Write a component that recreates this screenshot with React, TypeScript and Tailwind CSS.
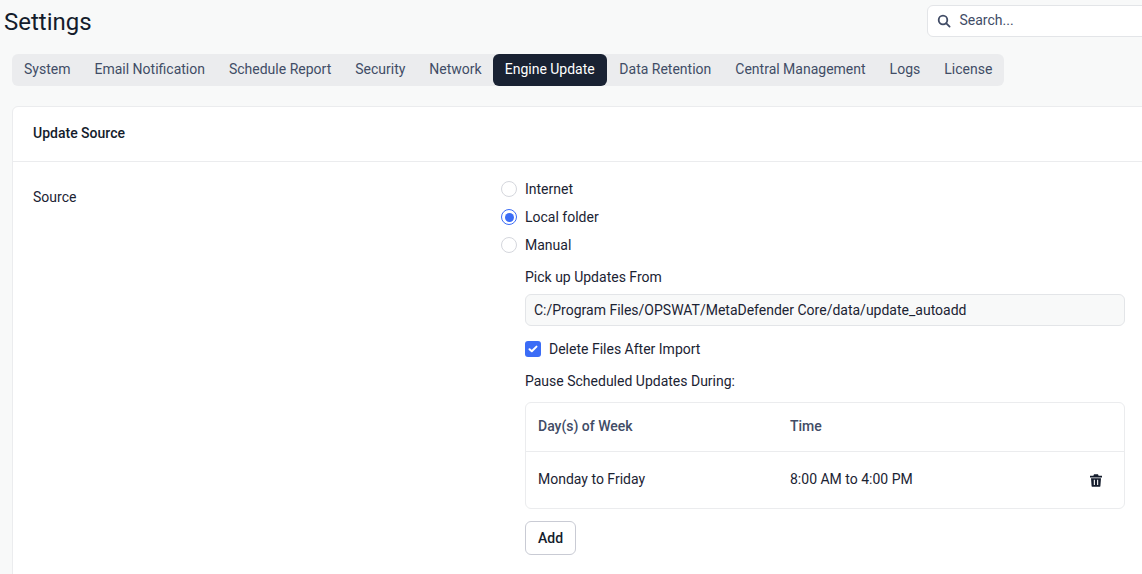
import React from "react";

const tabs = ["System", "Email Notification", "Schedule Report", "Security", "Network", "Engine Update", "Data Retention", "Central Management", "Logs", "License"];

function Radio({ label, checked }: { label: string; checked?: boolean }) {
  return (
    <div className="flex h-7 items-center gap-2">
      {checked ? (
        <span className="flex h-4 w-4 items-center justify-center rounded-full border-[1.5px] border-[#3b6cf6] bg-white">
          <span className="h-[9px] w-[9px] rounded-full bg-[#3b6cf6]" />
        </span>
      ) : (
        <span className="h-4 w-4 rounded-full border-[1.5px] border-[#d5d7dd] bg-white" />
      )}
      <span className="text-[#1b2333]">{label}</span>
    </div>
  );
}

export default function App() {
  return (
    <div className="h-[574px] w-[1142px] overflow-hidden bg-[#f8f9f9] text-sm text-[#1b2333] [font-family:Roboto,sans-serif]">
      <div className="flex h-[54px] justify-between">
        <h1 className="pl-1 pt-[5px] text-2xl leading-[34px] text-[#141c2c]">Settings</h1>
        <div className="mt-[5px] flex h-8 w-[240px] shrink-0 translate-x-[25px] items-center gap-2 rounded-md border border-[#e3e5e8] bg-white pl-[9px] text-[#414c66]">
          <svg width="14" height="14" viewBox="0 0 14 14" fill="none" stroke="#414c66" strokeWidth="1.8" strokeLinecap="round">
            <circle cx="6" cy="6" r="4.3" />
            <path d="M9.3 9.3 12.6 12.6" />
          </svg>
          <span className="ml-[0.5px] -translate-y-[1px]">Search...</span>
        </div>
      </div>
      <div className="ml-3 flex h-8 w-max rounded-md bg-[#ebecee]">
        {tabs.map((t) =>
          t === "Engine Update" ? (
            <div key={t} className="-ml-px mr-[0.6px] flex items-center rounded-md bg-[#192233] px-3 pb-[2px] text-white">{t}</div>
          ) : t === "License" ? (
            <div key={t} className="flex items-center pb-[2px] pl-3 pr-[11.4px] text-[#414c66]">{t}</div>
          ) : (
            <div key={t} className="flex items-center px-3 pb-[2px] text-[#414c66]">{t}</div>
          )
        )}
      </div>
      <div className="ml-3 mt-5 h-[520px] w-[1170px] rounded-t-md border border-[#ebecee] bg-white">
        <div className="flex h-[55px] items-center border-b border-[#ebecee] pb-[2px] pl-5 font-medium text-[#141c2c]">Update Source</div>
        <div className="flex pl-5 pt-[13px]">
          <div className="w-[468px] shrink-0 pt-2 leading-[28px]">Source</div>
          <div className="w-[624px]">
            <Radio label="Internet" />
            <Radio label="Local folder" checked />
            <Radio label="Manual" />
            <div className="pl-6">
              <div className="mt-[6px] flex h-6 items-center">Pick up Updates From</div>
              <div className="mt-[5px] flex h-8 items-center rounded-md border border-[#e3e5e8] bg-[#f8f9f9] pl-2">C:/Program Files/OPSWAT/MetaDefender Core/data/update_autoadd</div>
              <div className="mt-[11px] flex h-6 items-center gap-2">
                <span className="flex h-4 w-4 items-center justify-center rounded-[3px] bg-[#3b6cf6]">
                  <svg width="10" height="8" viewBox="0 0 10 8" fill="none" stroke="white" strokeWidth="2" strokeLinecap="round" strokeLinejoin="round">
                    <path d="M1.5 4.2 3.8 6.3 8.5 1.6" />
                  </svg>
                </span>
                <span>Delete Files After Import</span>
              </div>
              <div className="mt-2 flex h-6 items-center">Pause Scheduled Updates During:</div>
              <div className="mt-[9px] rounded-md border border-[#ebecee]">
                <div className="flex h-[49px] items-center border-b border-[#ebecee] pb-[2px] pl-3 font-medium text-[#414c66]">
                  <div className="w-[252px]">Day(s) of Week</div>
                  <div>Time</div>
                </div>
                <div className="flex h-[56px] items-center pl-3">
                  <div className="w-[252px] -translate-y-[1px]">Monday to Friday</div>
                  <div className="-translate-y-[1px]">8:00 AM to 4:00 PM</div>
                  <svg className="ml-auto mr-[22px]" width="12" height="13" viewBox="0 0 12 13" fill="#141c2c">
                    <path d="M4 .3h4l.6 1.4H12v1.7H0V1.7h3.4z" />
                    <path fillRule="evenodd" d="M1 4.2h10l-.6 7.7c0 .5-.5.9-1 .9H2.6c-.5 0-1-.4-1-.9zM3.8 5.8v5.2h1.1V5.8zm3.3 0v5.2h1.1V5.8z" />
                  </svg>
                </div>
              </div>
              <button className="mt-3 h-[34px] w-[51px] rounded-md border border-[#c9cbd4] bg-white font-medium text-[#141c2c]">Add</button>
            </div>
          </div>
        </div>
      </div>
    </div>
  );
}
